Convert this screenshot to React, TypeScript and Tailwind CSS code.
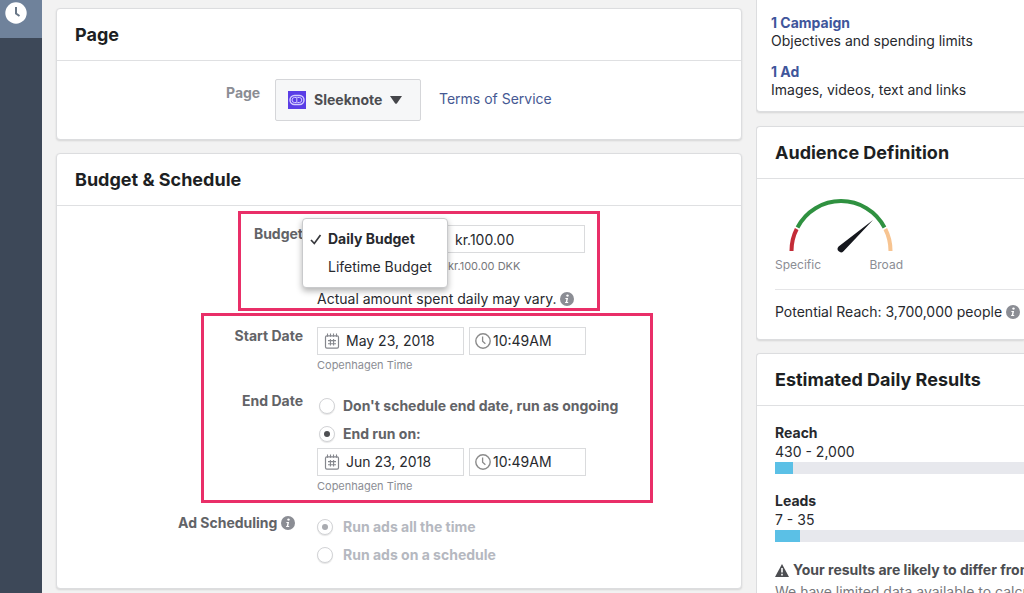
import type { ReactNode } from "react";

function Card({ title, className = "", children }: { title: string; className?: string; children: ReactNode }) {
  return (
    <section className={`border border-[#dcdddf] bg-white shadow-[0_1px_2px_rgba(0,0,0,0.12)] ${className}`}>
      <h2 className="border-b border-[#dfe0e2] pb-3 pl-[18px] pt-3 text-lg font-bold leading-[27px] text-[#1d1f23]">
        {title}
      </h2>
      {children}
    </section>
  );
}

function InfoIcon() {
  return (
    <svg viewBox="0 0 14 14" className="size-3.5 shrink-0" aria-hidden="true">
      <circle cx="7" cy="7" r="7" fill="#8b8d94" />
      <circle cx="7.5" cy="3.6" r="1.2" fill="#fff" />
      <path d="M5.4 6h2.7l-.9 4h1v1H5l.2-1h.6l.6-3h-1z" fill="#fff" />
    </svg>
  );
}

function CalendarIcon() {
  return (
    <svg viewBox="0 0 16 16" className="size-4 shrink-0" fill="none" stroke="#85878d" aria-hidden="true">
      <rect x="1.5" y="2.8" width="13" height="12.4" rx="1.4" strokeWidth="1.2" />
      <path d="M3.5 .4v3.4M6.5 .4v3.4M9.5 .4v3.4M12.5 .4v3.4" strokeWidth="1.1" />
      <path d="M4 7.6h8M4 10.8h8M6.4 6v6.6M9.6 6v6.6" strokeWidth="1.1" />
    </svg>
  );
}

function ClockIcon() {
  return (
    <svg viewBox="0 0 16 16" className="size-4 shrink-0" fill="none" stroke="#8b8b8b" aria-hidden="true">
      <circle cx="8" cy="8" r="7.2" strokeWidth="1.4" />
      <path d="M7.6 3.6v4.6l2.8 2.6" strokeWidth="1.3" />
    </svg>
  );
}

function DateTime({ name, date, time }: { name: string; date: string; time: string }) {
  return (
    <div>
      <div className="flex gap-[5px]">
        <label className="flex h-7 w-[147px] items-center gap-1.5 border border-[#dadbdd] bg-white pl-1.5">
          <CalendarIcon />
          <input aria-label={`${name} date`} defaultValue={date} className="w-full min-w-0 outline-none" />
        </label>
        <label className="flex h-7 w-[117px] items-center gap-0.5 border border-[#dadbdd] bg-white pl-[5px]">
          <ClockIcon />
          <input aria-label={`${name} time`} defaultValue={time} className="w-full min-w-0 outline-none" />
        </label>
      </div>
      <p className="mt-0.5 text-[11px] leading-4 text-[#8b8d94]">Copenhagen Time</p>
    </div>
  );
}

function Radio({ name, label, checked = false, disabled = false }: { name: string; label: string; checked?: boolean; disabled?: boolean }) {
  return (
    <label className={`flex h-7 items-center font-bold ${disabled ? "gap-2.5 text-[#b5b8c0]" : "gap-2 pl-0.5 text-[#626367]"}`}>
      <input
        type="radio"
        name={name}
        defaultChecked={checked}
        disabled={disabled}
        className="grid size-4 appearance-none place-content-center rounded-full border border-[#d2d3d6] bg-white shadow-[0_1px_1px_rgba(0,0,0,0.1)] before:size-1.5 before:rounded-full checked:before:bg-[#4e4f52] disabled:checked:before:bg-[#a9abb0]"
      />
      {label}
    </label>
  );
}

function Estimate({ label, range, fill }: { label: string; range: string; fill: number }) {
  return (
    <div>
      <h3 className="font-bold leading-[18px]">{label}</h3>
      <p className="leading-5">{range}</p>
      <div className="h-3 bg-[#e7e8ed]">
        <div className="h-3 bg-[#5bc0e6]" style={{ width: fill }} />
      </div>
    </div>
  );
}

function Gauge() {
  return (
    <svg viewBox="0 0 108 56" className="ml-[11px] h-14 w-27" fill="none" strokeWidth="4" role="img" aria-label="Audience between specific and broad">
      <path d="M5.5 54Q5.500 42 10.700 32" stroke="#c32b37" />
      <path d="M11.5 30.5A49 49 0 0 1 98.500 30.500" stroke="#2f9140" />
      <path d="M99.300 32Q104.500 42 104.500 54" stroke="#f7c491" />
      <path d="M87 23L57.500 54.200A3.200 3.200 0 0 1 52.600 49.600Z" fill="#15171d" />
    </svg>
  );
}

export default function App() {
  return (
    <div className="flex h-screen overflow-hidden bg-[#f2f2f2] font-[Inter,'Liberation_Sans',sans-serif] text-sm text-[#27292e]">
      <nav className="w-[42px] shrink-0 bg-[#3d4858]" aria-label="Tools">
        <button aria-label="History" className="block h-[38px] w-full bg-[#6f829b] pb-3 pl-[5px]">
          <svg viewBox="0 0 22 22" className="size-[22px]" fill="none" aria-hidden="true">
            <circle cx="11" cy="11" r="10.7" fill="#fff" />
            <path d="M11 5v6.500l3.500 2.500" stroke="#697787" strokeWidth="2" />
          </svg>
        </button>
      </nav>

      <main className="ml-3.5 min-w-0 flex-1 pt-2">
        <Card title="Page" className="rounded">
          <div className="flex pb-[18px] pl-[169px] pt-[18px]">
            <span className="w-9 pt-1 font-bold leading-5 text-[#8b8d94]">Page</span>
            <button className="ml-[13px] flex h-[42px] w-[146px] items-center gap-2 rounded-xs border border-[#d5d6d9] bg-[#f6f7f8] pl-3 font-bold text-[#4c4d51]">
              <svg viewBox="0 0 18 18" className="size-[18px] shrink-0" fill="none" stroke="#d3ccff" aria-hidden="true">
                <path d="M0 0h18v18H0z" fill="#5a3de6" stroke="none" />
                <rect x="2" y="4.500" width="14" height="9" rx="4.500" strokeWidth="1.400" />
                <path d="M8 6.500H6.500a2.500 2.500 0 0 0 0 5H8M9.500 6.500h1.800a2.500 2.500 0 0 1 0 5H9.500M8.800 6v6" />
              </svg>
              Sleeknote
              <svg viewBox="0 0 12 8" className="h-2 w-3 shrink-0" aria-hidden="true">
                <path d="M0 0h12L7 7.300q-1 1-2 0z" fill="#45464a" />
              </svg>
            </button>
            <a href="#terms" className="ml-[18px] pt-2.5 leading-5 text-[#465993]">Terms of Service</a>
          </div>
        </Card>

        <Card title="Budget &amp; Schedule" className="mt-[13px] rounded">
          <div className="pb-[19px] pt-[5px]">
            <div className="relative ml-[181px] flex w-[362px] gap-3.5 border-3 border-[#e92f68] pt-[11px]">
              <span className="w-[62px] text-right font-bold leading-[18px] text-[#626367]">Budget</span>
              <div className="whitespace-nowrap">
                <input
                  aria-label="Budget amount"
                  defaultValue="kr.100.00"
                  className="ml-[126px] block h-7 w-[142px] border border-[#dadbdd] pl-[11px] outline-none"
                />
                <p className="ml-[131px] mt-[5px] text-[11px] leading-4 text-[#77787c]">kr.100.00 DKK</p>
                <p className="mt-4 flex items-center gap-1 leading-[18px]">
                  Actual amount spent daily may vary. <InfoIcon />
                </p>
              </div>
              <div
                role="listbox"
                aria-label="Budget type"
                className="absolute left-[61px] top-1 w-[146px] whitespace-nowrap rounded-sm border border-[#c9cacc] bg-white py-1.5 shadow-[0_3px_6px_rgba(0,0,0,0.3)]"
              >
                <button role="option" aria-selected="true" className="flex h-7 w-full items-center gap-1.5 pl-[7px] font-bold">
                  <svg viewBox="0 0 12 12" className="size-3 shrink-0" fill="none" aria-hidden="true">
                    <path d="M1 7l3.300 3.500L10.500 2" stroke="#37383c" strokeWidth="1.700" />
                  </svg>
                  Daily Budget
                </button>
                <button role="option" aria-selected="false" className="flex h-7 w-full items-center pl-[25px]">
                  Lifetime Budget
                </button>
              </div>
            </div>

            <div className="ml-36 mt-0.5 w-[452px] border-3 border-[#e92f68] pb-1.5 pt-[11px]">
              <div className="flex gap-3.5">
                <span className="w-[99px] text-right font-bold leading-[18px] text-[#626367]">Start Date</span>
                <DateTime name="Start" date="May 23, 2018" time="10:49AM" />
              </div>
              <div className="mt-[19px] flex gap-3.5">
                <span className="w-[99px] text-right font-bold leading-[18px] text-[#626367]">End Date</span>
                <div>
                  <Radio name="end" label="Don't schedule end date, run as ongoing" />
                  <Radio name="end" label="End run on:" checked />
                  <DateTime name="End" date="Jun 23, 2018" time="10:49AM" />
                </div>
              </div>
            </div>

            <div className="mt-2.5 flex gap-[18px] pl-[121px]">
              <span className="flex h-5 w-[121px] items-center gap-1 whitespace-nowrap font-bold text-[#626367]">
                Ad Scheduling <InfoIcon />
              </span>
              <div>
                <Radio name="ads" label="Run ads all the time" checked disabled />
                <Radio name="ads" label="Run ads on a schedule" disabled />
              </div>
            </div>
          </div>
        </Card>
      </main>

      <aside className="ml-3.5 w-[268px] shrink-0 overflow-hidden whitespace-nowrap pl-px">
        <section className="-ml-px flex flex-col gap-[13px] rounded-bl border-b border-l border-[#dcdddf] bg-white pb-3 pl-3.5 pt-3.5 shadow-[0_1px_2px_rgba(0,0,0,0.12)]">
          <div className="leading-[18px]">
            <a href="#campaign" className="block font-bold text-[#3f569b]">1 Campaign</a>
            <p>Objectives and spending limits</p>
          </div>
          <div className="leading-[18px]">
            <a href="#ad" className="block font-bold text-[#3f569b]">1 Ad</a>
            <p>Images, videos, text and links</p>
          </div>
        </section>

        <Card title="Audience Definition" className="-ml-px mt-3.5 rounded-l border-r-0">
          <div className="pb-[18px] pl-[18px] pt-[18px]">
            <Gauge />
            <div className="flex w-32 justify-between pt-1 text-xs leading-4 text-[#8b8d94]">
              <span>Specific</span>
              <span>Broad</span>
            </div>
            <p className="mt-4 flex items-center gap-1 border-t border-[#e5e5e7] pt-[13px] leading-[18px]">
              Potential Reach: 3,700,000 people <InfoIcon />
            </p>
          </div>
        </Card>

        <Card title="Estimated Daily Results" className="-ml-px mt-[13px] rounded-l border-r-0">
          <div className="flex flex-col gap-[18px] pl-[18px] pt-[18px]">
            <Estimate label="Reach" range="430 - 2,000" fill={18} />
            <Estimate label="Leads" range="7 - 35" fill={25} />
            <div className="text-[#4c4d51]">
              <h3 className="flex items-center gap-1 font-bold leading-5">
                <svg viewBox="0 0 14 13" className="h-[13px] w-3.5 shrink-0" aria-hidden="true">
                  <path d="M7 0l7 13H0z" fill="#4c4d51" />
                  <path d="M7 4v4.500M7 9.800v1.600" stroke="#fff" strokeWidth="1.600" />
                </svg>
                Your results are likely to differ from estimates
              </h3>
              <p className="mt-0.5 leading-5 text-[#77787c]">We have limited data available to calculate</p>
            </div>
          </div>
        </Card>
      </aside>
    </div>
  );
}
